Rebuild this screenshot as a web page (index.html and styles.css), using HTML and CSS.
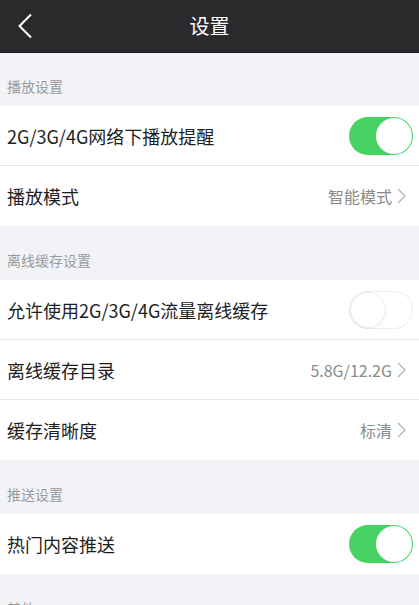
FILE: index.html
```html
<!DOCTYPE html>
<html lang="zh-CN">
<head>
<meta charset="utf-8">
<title>设置</title>
<link rel="stylesheet" href="styles.css">
</head>
<body>
<div class="page">
  <header class="topbar">
    <svg class="back" width="16" height="26" viewBox="0 0 16 26"><path d="M14 1.5 L2.5 13 L14 24.5" fill="none" stroke="#fff" stroke-width="2"/></svg>
    <h1 class="title">设置</h1>
  </header>

  <div class="section-label first">播放设置</div>
  <div class="group">
    <div class="row"><span class="row-text">2G/3G/4G网络下播放提醒</span><span class="switch on"><span class="knob"></span></span></div>
    <div class="row"><span class="row-text">播放模式</span><span class="value">智能模式<svg class="chev" width="9" height="16" viewBox="0 0 9 16"><path d="M1 1 L8 8 L1 15" fill="none" stroke="#b4b4b4" stroke-width="1.3"/></svg></span></div>
  </div>

  <div class="section-label">离线缓存设置</div>
  <div class="group">
    <div class="row"><span class="row-text">允许使用2G/3G/4G流量离线缓存</span><span class="switch off"><span class="knob"></span></span></div>
    <div class="row"><span class="row-text">离线缓存目录</span><span class="value">5.8G/12.2G<svg class="chev" width="9" height="16" viewBox="0 0 9 16"><path d="M1 1 L8 8 L1 15" fill="none" stroke="#b4b4b4" stroke-width="1.3"/></svg></span></div>
    <div class="row"><span class="row-text">缓存清晰度</span><span class="value">标清<svg class="chev" width="9" height="16" viewBox="0 0 9 16"><path d="M1 1 L8 8 L1 15" fill="none" stroke="#b4b4b4" stroke-width="1.3"/></svg></span></div>
  </div>

  <div class="section-label">推送设置</div>
  <div class="group">
    <div class="row"><span class="row-text">热门内容推送</span><span class="switch on"><span class="knob"></span></span></div>
  </div>

  <div class="section-label">其他</div>
</div>
</body>
</html>
```
FILE: styles.css
```css
* { box-sizing: border-box; }
html, body { margin: 0; padding: 0; }
body {
  background: #f3f3f7;
  font-family: "Noto Sans CJK SC", "Noto Sans", sans-serif;
  width: 419px;
  height: 605px;
  overflow: hidden;
}
.topbar {
  height: 53px;
  background: #2a2a2c;
  display: flex;
  align-items: center;
  justify-content: center;
  position: relative;
  border-bottom: 1px solid #1c1c1e;
}
.back {
  position: absolute;
  left: 17px;
  top: 13px;
}
.title {
  margin: 0;
  color: #fff;
  font-size: 20px;
  font-weight: 400;
  line-height: 1;
}
.section-label {
  height: 54px;
  padding: 13px 7px 0;
  display: flex;
  align-items: center;
  font-size: 14px;
  color: #9a9a9a;
}
.section-label.first {
  height: 53px;
  padding-top: 12px;
}
.group {
  background: #fff;
}
.row {
  height: 60px;
  display: flex;
  align-items: center;
  justify-content: space-between;
  padding: 0 6px 0 7px;
  border-bottom: 1px solid #e6e6e8;
}
.row:last-child { border-bottom: none; }
.row-text {
  font-size: 18px;
  color: #1e1e1e;
}
.value {
  display: flex;
  align-items: center;
  gap: 5px;
  font-size: 16px;
  color: #8a8a8a;
  padding-right: 7px;
}
.chev { display: block; }
.switch {
  width: 64px;
  height: 38px;
  border-radius: 19px;
  display: flex;
  align-items: center;
  padding: 1px;
}
.switch.on {
  background: #45d263;
  justify-content: flex-end;
}
.switch.off {
  background: #fff;
  border: 1px solid #ededed;
  justify-content: flex-start;
  padding: 0;
}
.knob {
  width: 36px;
  height: 36px;
  border-radius: 50%;
  background: #fff;
}
.switch.off .knob {
  border: 1px solid #ececec;
  box-shadow: 0 1px 2px rgba(0,0,0,0.05);
}
```
